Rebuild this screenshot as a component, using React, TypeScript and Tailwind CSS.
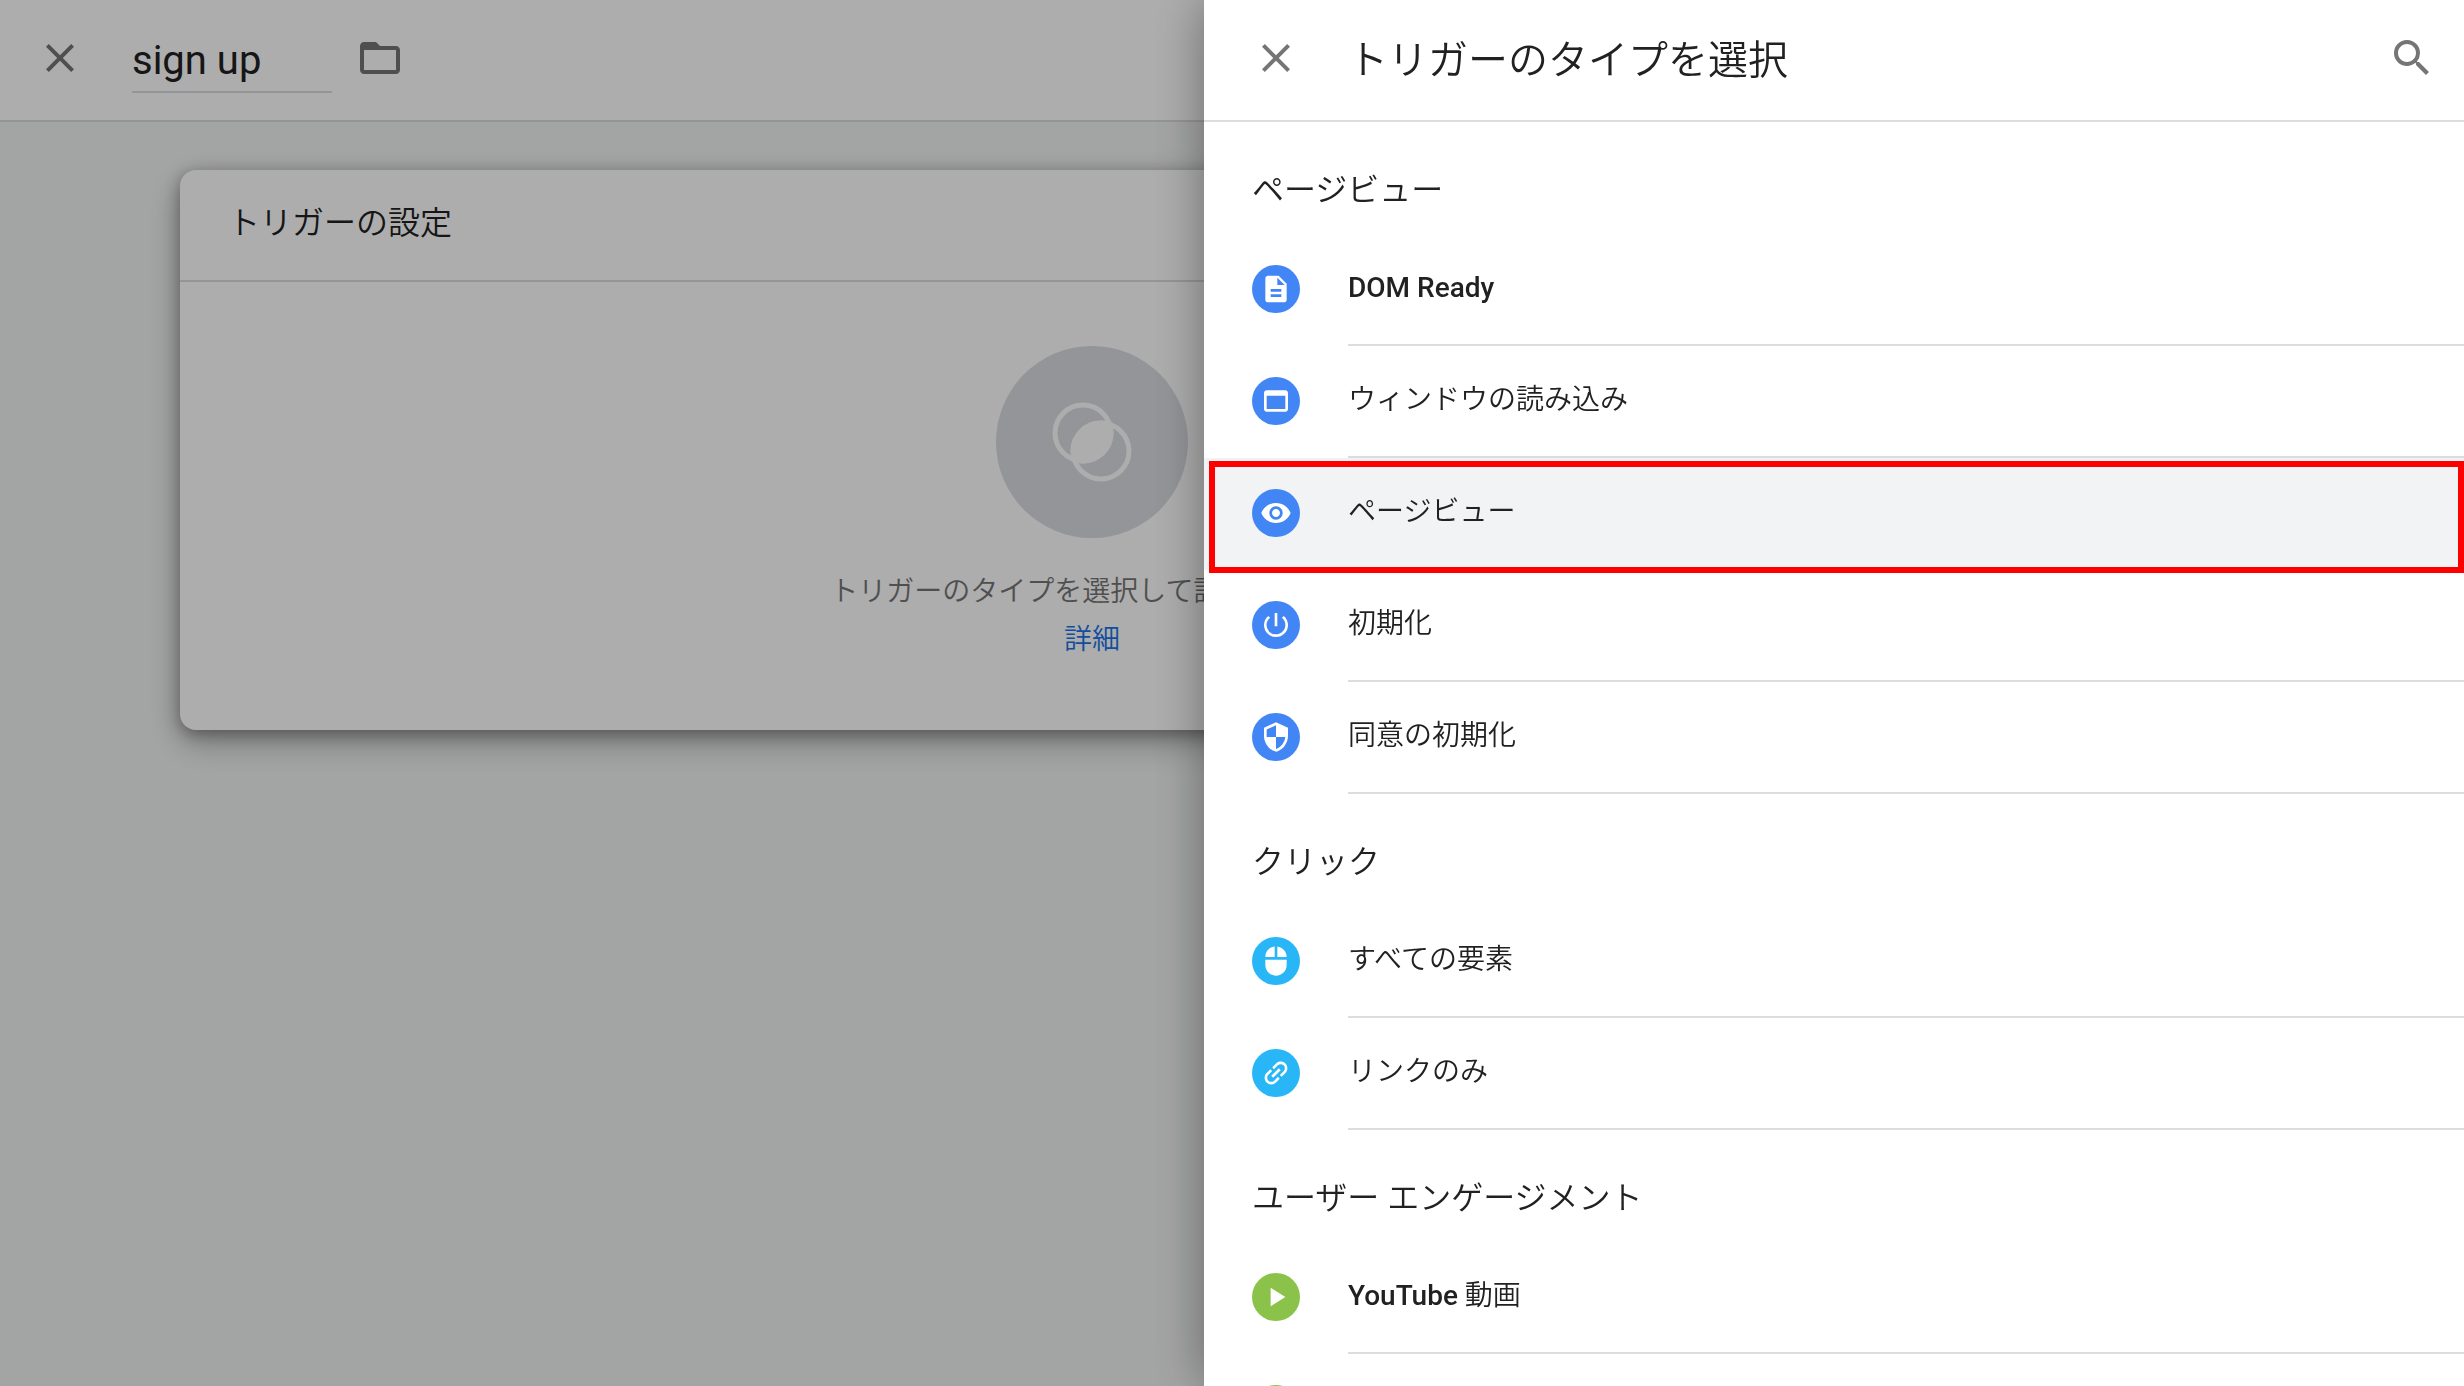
import type { ReactNode } from "react";
import type { IconType } from "react-icons";
import {
  MdClose,
  MdDescription,
  MdFolderOpen,
  MdMouse,
  MdPlayArrow,
  MdPowerSettingsNew,
  MdSearch,
  MdSecurity,
  MdVisibility,
} from "react-icons/md";

type TriggerType = {
  id: string;
  label?: ReactNode;
  icon?: ReactNode;
  highlighted?: boolean;
};

type TriggerGroup = {
  title: string;
  color: string;
  items: TriggerType[];
};

function glyph(Icon: IconType) {
  return <Icon className="size-8" aria-hidden />;
}

function WindowIcon() {
  return (
    <svg viewBox="0 0 24 24" className="size-8" fill="currentColor" aria-hidden>
      <path d="M19 4H5c-1.11 0-2 .9-2 2v12c0 1.1.89 2 2 2h14c1.1 0 2-.9 2-2V6c0-1.1-.89-2-2-2zm0 14H5V8h14v10z" />
    </svg>
  );
}

function LinkIcon() {
  return (
    <svg viewBox="0 0 24 24" className="size-8 -rotate-45" fill="currentColor" aria-hidden>
      <path d="M3.9 12c0-1.71 1.39-3.1 3.1-3.1h4V7H7c-2.76 0-5 2.24-5 5s2.24 5 5 5h4v-1.9H7c-1.71 0-3.1-1.39-3.1-3.1zM8 13h8v-2H8v2zm9-6h-4v1.9h4c1.71 0 3.1 1.39 3.1 3.1s-1.39 3.1-3.1 3.1h-4V17h4c2.76 0 5-2.24 5-5s-2.24-5-5-5z" />
    </svg>
  );
}

/** Two overlapping rings with the shared part filled in. */
function TriggerIcon() {
  return (
    <svg viewBox="0 0 80 80" className="size-20 text-white" aria-hidden>
      <clipPath id="first-ring">
        <circle cx="31" cy="31" r="30.5" />
      </clipPath>
      <g fill="none" stroke="currentColor" strokeWidth="5">
        <circle cx="31" cy="31" r="28" />
        <circle cx="49" cy="49" r="28" />
      </g>
      <circle cx="49" cy="49" r="30.5" fill="currentColor" clipPath="url(#first-ring)" />
    </svg>
  );
}

const groups: TriggerGroup[] = [
  {
    title: "ページビュー",
    color: "bg-[#4285f4]",
    items: [
      { id: "dom", label: <span className="font-medium">DOM Ready</span>, icon: glyph(MdDescription) },
      { id: "window", label: "ウィンドウの読み込み", icon: <WindowIcon /> },
      { id: "pageview", label: "ページビュー", icon: glyph(MdVisibility), highlighted: true },
      { id: "init", label: "初期化", icon: glyph(MdPowerSettingsNew) },
      { id: "consent", label: "同意の初期化", icon: glyph(MdSecurity) },
    ],
  },
  {
    title: "クリック",
    color: "bg-[#29b6f6]",
    items: [
      { id: "click", label: "すべての要素", icon: glyph(MdMouse) },
      { id: "link", label: "リンクのみ", icon: <LinkIcon /> },
    ],
  },
  {
    title: "ユーザー エンゲージメント",
    color: "bg-[#8bc34a]",
    items: [
      {
        id: "youtube",
        label: (
          <>
            <span className="font-medium">YouTube</span> 動画
          </>
        ),
        icon: glyph(MdPlayArrow),
      },
      { id: "next" },
    ],
  },
];

function TriggerRow({ item, color }: { item: TriggerType; color: string }) {
  return (
    <li className={item.highlighted ? "relative bg-[#f1f3f4]" : ""}>
      <button type="button" className="flex w-full pl-12 text-left">
        <span className="mr-12 flex h-[110px] items-center">
          <span className={`flex size-12 items-center justify-center rounded-full text-white ${color}`}>
            {item.icon}
          </span>
        </span>
        <span className="flex h-28 flex-1 items-center border-b-2 border-[#dadce0] pb-0.5 text-[28px]">
          <span>{item.label}</span>
        </span>
      </button>
      {item.highlighted && (
        <span className="pointer-events-none absolute top-[3px] right-0 left-[5px] z-10 h-28 border-6 border-[#ff0000]" />
      )}
    </li>
  );
}

function TriggerPicker() {
  return (
    <aside className="flex h-full w-full max-w-[1260px] flex-col bg-white shadow-[0_0_48px_rgba(0,0,0,0.38)]">
      <header className="flex h-[122px] shrink-0 items-center border-b-2 border-[#dadce0] pr-7 pb-1 pl-12">
        <button type="button" aria-label="閉じる" className="text-[#757575]">
          <MdClose className="size-12" />
        </button>
        <h2 className="ml-12 flex-1 pt-1.5 text-[40px]">トリガーのタイプを選択</h2>
        <button type="button" aria-label="検索" className="text-[#757575]">
          <MdSearch className="size-12" />
        </button>
      </header>
      <div className="flex-1 overflow-y-auto [scrollbar-width:none]">
        {groups.map((group) => (
          <section key={group.title}>
            <h3 className="flex h-28 items-center pt-6 pl-12 text-[32px]">{group.title}</h3>
            <ul>
              {group.items.map((item) => (
                <TriggerRow key={item.id} item={item} color={group.color} />
              ))}
            </ul>
          </section>
        ))}
      </div>
    </aside>
  );
}

function TriggerEditor() {
  return (
    <div className="h-full bg-[#f1f3f2]">
      <header className="flex h-[122px] items-center border-b-2 border-[#dadce0] bg-white pb-1 pl-9">
        <button type="button" aria-label="閉じる" className="text-[#757575]">
          <MdClose className="size-12" />
        </button>
        <input
          type="text"
          aria-label="トリガー名"
          defaultValue="sign up"
          className="ml-12 h-[70px] w-50 border-b-2 border-[#dadce0] pt-1.5 text-[40px] font-normal outline-none"
        />
        <button type="button" aria-label="フォルダ" className="ml-6 text-[#757575]">
          <MdFolderOpen className="size-12" />
        </button>
      </header>
      <main className="pt-12 pr-[460px] pl-[180px]">
        <section className="rounded-2xl bg-white shadow-[0_12px_32px_rgba(0,0,0,0.3),0_4px_16px_rgba(0,0,0,0.3)]">
          <h2 className="flex h-28 items-center border-b-2 border-[#dadce0] pb-1 pl-12 text-[32px]">
            トリガーの設定
          </h2>
          <div className="flex flex-col items-center pt-16 pb-[66px] text-[28px] leading-12 whitespace-nowrap">
            <div className="mb-[30px] flex size-48 items-center justify-center rounded-full bg-[#dadce0]">
              <TriggerIcon />
            </div>
            <p className="text-[#757575]">トリガーのタイプを選択して設定を開始...</p>
            <a href="#" className="text-[#1a73e8]">
              詳細
            </a>
          </div>
        </section>
      </main>
    </div>
  );
}

export default function App() {
  return (
    <div
      lang="ja"
      className="h-screen overflow-hidden font-[Roboto,'Noto_Sans_CJK_JP',sans-serif] font-[350] text-[#212121]"
    >
      <TriggerEditor />
      <div className="fixed inset-0 flex justify-end bg-black/32">
        <TriggerPicker />
      </div>
    </div>
  );
}
